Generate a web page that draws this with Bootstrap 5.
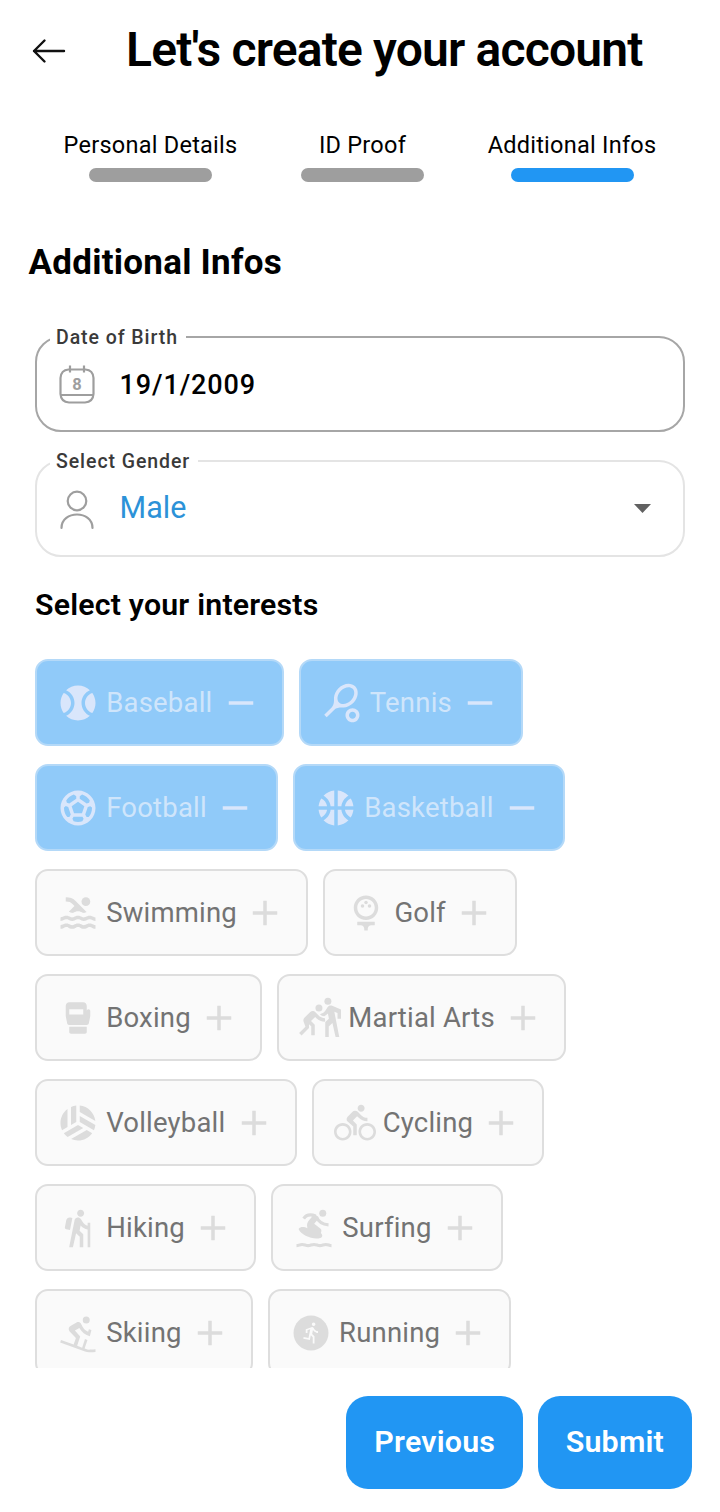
<!DOCTYPE html>
<html lang="en">
<head>
<meta charset="utf-8">
<meta name="viewport" content="width=device-width, initial-scale=1">
<title>Create account</title>
<link href="https://cdn.jsdelivr.net/npm/bootstrap@5.3.0/dist/css/bootstrap.min.css" rel="stylesheet">
<style>
body{font-family:Roboto,"Liberation Sans",sans-serif;color:#000;background:#fff;line-height:1}
.screen{height:1512px;overflow:hidden}
.topbar{height:102px;padding-left:27px}
.topbar h1{font-size:48px;font-weight:600;letter-spacing:-.82px;margin:0 0 0 57px;padding-bottom:2px;line-height:1;white-space:nowrap}
.steps{height:84px;padding-top:32px}
.step{font-size:23.5px;letter-spacing:.25px;white-space:nowrap}
.step-personal{width:240px}
.step-proof{width:184px}
.step-infos{width:235px}
.step-line{width:123px;height:14px;border-radius:7px;background:#9e9e9e;margin-top:10px}
.step-line.active{background:#2196f3}
.section-title{font-size:35px;font-weight:700;letter-spacing:.25px;margin:0;line-height:42px;padding:56px 0 0 28.5px}
.field{height:96px;border:2px solid #a6a6a6;border-radius:26px;margin:52px 35px 0;padding:0 32px 0 20px}
.field.soft{height:97px;border-color:#e4e4e4;margin-top:28px}
.field label{left:13px;top:-10px;background:#fff;padding:0 8px 0 6px;font-size:19.5px;line-height:20px;font-weight:500;letter-spacing:.93px;color:#3a3a3a}
.value{margin-left:22.5px}
.date{font-size:27px;letter-spacing:.9px;font-weight:500;margin-top:2px}
.male{font-size:30.5px;color:#2c92d8;margin-top:-1px}
.interests-title{font-size:30.3px;font-weight:600;letter-spacing:.2px;margin:0;line-height:36px;padding:30px 0 0 35px}
.chips{height:709px;margin-top:36px;overflow:hidden;gap:18px 15px;padding:0 35px}
.chip{height:87px;border:2px solid #dedede;border-radius:13px;background:#fafafa;color:#737373;font-size:27.5px;letter-spacing:.2px;padding:0 20px;gap:7.2px}
.chip span{padding-top:1px}
.chip svg{width:42px;height:42px;fill:#dcdcdc;flex:none}
.chip.picked{background:#90caf9;border-color:#b4d9f8;color:#cfe5fb}
.chip.picked svg{fill:#d9e6fb}
.actions{padding:28px 28px 0 0;gap:14.5px}
.btn-main{height:93px;border-radius:22px;background:#2196f3;color:#fff;font-size:30.4px;font-weight:600;letter-spacing:.2px;padding:0 28px 2px;border:0}
</style>
</head>
<body>
<main class="screen d-flex flex-column">
<header class="topbar d-flex align-items-center">
<svg width="42" height="42" viewBox="0 0 42 42" fill="none" stroke="#111" stroke-width="2.4" stroke-linecap="round" stroke-linejoin="round"><path d="M37 21H7M17.5 10.5L7 21l10.5 10.5"/></svg>
<h1>Let's create your account</h1>
</header>
<nav class="steps d-flex justify-content-center">
<div class="step step-personal d-flex flex-column align-items-center">Personal Details<div class="step-line"></div></div>
<div class="step step-proof d-flex flex-column align-items-center">ID Proof<div class="step-line"></div></div>
<div class="step step-infos d-flex flex-column align-items-center">Additional Infos<div class="step-line active"></div></div>
</nav>
<h2 class="section-title">Additional Infos</h2>
<div class="field position-relative d-flex align-items-center">
<label class="position-absolute">Date of Birth</label>
<svg width="40" height="44" viewBox="0 0 40 44" fill="none" stroke="#9e9e9e" stroke-width="2.2"><path d="M11.5 7.500H28.500Q36 8 36.500 16V32Q36 40 28 40.500H12Q4 40 3.500 32V16Q4 8 11.500 7.500zM4 33H36M13 3.500V10.500M27 3.500V10.500"/><text x="20" y="28" text-anchor="middle" font-family="Roboto" font-weight="700" font-size="16.5" fill="#9e9e9e" stroke="none">8</text></svg>
<span class="value date">19/1/2009</span>
</div>
<div class="field soft position-relative d-flex align-items-center">
<label class="position-absolute">Select Gender</label>
<svg width="40" height="44" viewBox="0 0 40 44" fill="none" stroke="#9e9e9e" stroke-width="2.2" stroke-linecap="round"><circle cx="20" cy="14" r="9.3"/><path d="M4.500 41C4.500 23 35.500 23 35.500 41"/></svg>
<span class="value male">Male</span>
<svg class="ms-auto" width="17" height="9" viewBox="0 0 17 9"><path d="M0 0H17L8.500 9z" fill="#616161"/></svg>
</div>
<h3 class="interests-title">Select your interests</h3>
<section class="chips d-flex flex-wrap align-content-start">
<div class="chip picked d-flex align-items-center"><svg viewBox="0 0 24 24"><path d="M3.810 6.280C2.670 7.900 2 9.870 2 12s.67 4.100 1.810 5.720C6.230 16.950 8 14.680 8 12S6.230 7.050 3.810 6.280zM20.190 6.280C17.770 7.050 16 9.320 16 12s1.770 4.950 4.190 5.720C21.330 16.100 22 14.130 22 12s-.67-4.100-1.810-5.720zM14 12c0-3.280 1.970-6.090 4.790-7.330C17.010 3.020 14.630 2 12 2S6.990 3.020 5.210 4.670C8.030 5.910 10 8.720 10 12s-1.970 6.090-4.790 7.330C6.990 20.980 9.370 22 12 22s5.010-1.020 6.790-2.670C15.970 18.090 14 15.280 14 12z"/></svg><span>Baseball</span><svg viewBox="0 0 24 24"><path d="M19 13H5v-2h14z"/></svg></div>
<div class="chip picked d-flex align-items-center"><svg viewBox="0 0 24 24"><path d="M19.520 2.490c-2.340-2.340-6.620-1.870-9.550 1.060-1.600 1.600-2.520 3.870-2.540 5.460-.02 1.580.26 3.890-1.350 5.500l-4.240 4.240 1.420 1.420 4.240-4.240c1.610-1.610 3.920-1.330 5.500-1.350s3.860-.94 5.460-2.540c2.920-2.930 3.400-7.210 1.060-9.550zm-9.200 9.190c-1.530-1.530-1.050-4.610 1.060-6.720s5.180-2.590 6.720-1.060c1.530 1.530 1.050 4.610-1.060 6.720s-5.180 2.590-6.720 1.060zM18 17c.53 0 1.040.21 1.410.59.78.78.78 2.050 0 2.830-.37.37-.88.58-1.410.58s-1.040-.21-1.410-.59c-.78-.78-.78-2.050 0-2.830.37-.37.88-.58 1.410-.58m0-2c-1.020 0-2.050.39-2.830 1.170-1.560 1.560-1.560 4.090 0 5.660.78.78 1.810 1.170 2.830 1.170s2.050-.39 2.830-1.170c1.560-1.560 1.560-4.090 0-5.660C20.050 15.390 19.020 15 18 15z"/></svg><span>Tennis</span><svg viewBox="0 0 24 24"><path d="M19 13H5v-2h14z"/></svg></div>
<div class="chip picked d-flex align-items-center"><svg viewBox="0 0 24 24"><path d="M12 2C6.480 2 2 6.480 2 12s4.480 10 10 10 10-4.480 10-10S17.520 2 12 2zm1 3.300l1.350-.95c1.820.56 3.370 1.760 4.380 3.340l-.39 1.340-1.350.46L13 6.700V5.300zm-3.350-.95L11 5.300v1.400L7.010 9.490l-1.350-.46-.39-1.340c1.010-1.570 2.560-2.770 4.380-3.340zM7.080 17.110l-1.140.1C4.730 15.810 4 13.990 4 12c0-.12.01-.23.02-.35l1-.73 1.380.48 1.460 4.340-.78 1.370zm7.420 2.480c-.79.26-1.630.41-2.500.41s-1.710-.15-2.500-.41l-.69-1.490.64-1.100h5.110l.64 1.110-.7 1.480zM14.270 15H9.730l-1.350-4.020L12 8.440l3.630 2.540L14.270 15zm3.790 2.210l-1.140-.1-.79-1.370 1.460-4.340 1.390-.47 1 .73c.01.11.02.22.02.34 0 1.990-.73 3.810-1.940 5.210z"/></svg><span>Football</span><svg viewBox="0 0 24 24"><path d="M19 13H5v-2h14z"/></svg></div>
<div class="chip picked d-flex align-items-center"><svg viewBox="0 0 24 24"><path d="M17.090 11h4.860c-.16-1.610-.71-3.110-1.540-4.400-1.730.83-2.990 2.450-3.320 4.400zM6.910 11C6.580 9.050 5.320 7.430 3.590 6.600 2.760 7.890 2.210 9.390 2.050 11h4.860zM15.070 11c.32-2.590 1.880-4.790 4.060-6-1.600-1.630-3.740-2.710-6.130-2.950V11h2.070zM8.930 11H11V2.050C8.610 2.290 6.460 3.370 4.870 5c2.180 1.210 3.740 3.410 4.060 6zM15.070 13H13v8.950c2.390-.24 4.540-1.320 6.130-2.950-2.180-1.210-3.740-3.410-4.060-6zM3.590 17.400c1.730-.83 2.990-2.450 3.320-4.400H2.050c.16 1.610.71 3.110 1.540 4.400zM17.090 13c.33 1.950 1.590 3.570 3.320 4.400.83-1.290 1.380-2.790 1.540-4.400h-4.860zM8.930 13c-.32 2.590-1.880 4.790-4.060 6 1.600 1.630 3.740 2.710 6.130 2.950V13H8.930z"/></svg><span>Basketball</span><svg viewBox="0 0 24 24"><path d="M19 13H5v-2h14z"/></svg></div>
<div class="chip d-flex align-items-center"><svg viewBox="0 0 24 24"><path d="M22 21c-1.110 0-1.730-.37-2.180-.64-.37-.22-.6-.36-1.150-.36-.56 0-.78.13-1.150.36-.46.27-1.070.64-2.180.64s-1.730-.37-2.180-.64c-.37-.22-.6-.36-1.150-.36-.56 0-.78.13-1.150.36-.46.27-1.080.64-2.190.64-1.110 0-1.730-.37-2.180-.64-.37-.23-.6-.36-1.150-.36s-.78.13-1.150.36c-.46.27-1.080.64-2.190.64v-2c.56 0 .78-.13 1.150-.36.46-.27 1.080-.64 2.190-.64s1.730.37 2.180.64c.37.23.59.36 1.150.36.56 0 .78-.13 1.150-.36.46-.27 1.080-.64 2.190-.64 1.110 0 1.730.37 2.180.64.37.22.6.36 1.150.36s.78-.13 1.150-.36c.45-.27 1.070-.64 2.180-.64s1.730.37 2.180.64c.37.23.59.36 1.150.36v2zm0-4.500c-1.110 0-1.730-.37-2.180-.64-.37-.22-.6-.36-1.150-.36-.56 0-.78.13-1.150.36-.45.27-1.070.64-2.180.64s-1.730-.37-2.180-.64c-.37-.22-.6-.36-1.150-.36-.56 0-.78.13-1.150.36-.45.27-1.070.64-2.180.64s-1.730-.37-2.180-.64c-.37-.22-.6-.36-1.150-.36s-.78.13-1.150.36c-.47.27-1.090.64-2.200.64v-2c.56 0 .78-.13 1.150-.36.45-.27 1.070-.64 2.180-.64s1.730.37 2.180.64c.37.22.6.36 1.150.36.56 0 .78-.13 1.150-.36.45-.27 1.070-.64 2.180-.64s1.730.37 2.180.64c.37.22.6.36 1.150.36s.78-.13 1.150-.36c.45-.27 1.070-.64 2.180-.64s1.730.37 2.180.64c.37.22.6.36 1.150.36v2zM8.670 12c.56 0 .78-.13 1.150-.36.46-.27 1.080-.64 2.190-.64 1.110 0 1.730.37 2.180.64.37.22.6.36 1.150.36s.78-.13 1.150-.36c.12-.07.26-.15.41-.23L10.480 5C8.930 3.450 7.500 2.990 5 3v2.500c1.820-.01 2.890.39 4 1.500l1 1-3.250 3.250c.31.12.56.27.77.39.37.23.59.36 1.150.36z"/><circle cx="16.500" cy="5.500" r="2.500"/></svg><span>Swimming</span><svg viewBox="0 0 24 24"><path d="M19 13h-6v6h-2v-6H5v-2h6V5h2v6h6z"/></svg></div>
<div class="chip d-flex align-items-center"><svg viewBox="0 0 24 24"><path d="M12 16c3.870 0 7-3.130 7-7s-3.130-7-7-7-7 3.130-7 7 3.130 7 7 7zm0-12c2.760 0 5 2.240 5 5s-2.240 5-5 5-5-2.240-5-5 2.240-5 5-5z"/><circle cx="10" cy="8" r="1"/><circle cx="14" cy="8" r="1"/><circle cx="12" cy="6" r="1"/><path d="M7 19h2c1.100 0 2 .9 2 2v1h2v-1c0-1.100.9-2 2-2h2v-2H7v2z"/></svg><span>Golf</span><svg viewBox="0 0 24 24"><path d="M19 13h-6v6h-2v-6H5v-2h6V5h2v6h6z"/></svg></div>
<div class="chip d-flex align-items-center"><svg viewBox="0 0 24 24"><path d="M7 20c0 .55.45 1 1 1h8c.55 0 1-.45 1-1v-3H7v3zM18 7c-.55 0-1 .45-1 1V5c0-1.100-.9-2-2-2H7c-1.100 0-2 .9-2 2v5.800c0 .13.01.26.04.39l.8 4c.09.47.5.8.98.8H17c.55 0 1.090-.44 1.200-.98l.77-3.830c.02-.12.03-.25.03-.38V8C19 7.450 18.550 7 18 7zM15 10H7V7h8V10z"/></svg><span>Boxing</span><svg viewBox="0 0 24 24"><path d="M19 13h-6v6h-2v-6H5v-2h6V5h2v6h6z"/></svg></div>
<div class="chip d-flex align-items-center"><svg viewBox="0 0 24 24"><circle cx="16.500" cy="2.380" r="2"/><path d="M24 11.880v-4.700l-5.050-2.140c-.97-.41-2.090-.06-2.650.84l-1 1.600c-.67 1.180-1.910 2.060-3.410 2.320l.06.06c.69.69 1.520 1.070 2.460 1.170.8-.42 1.520-.98 2.090-1.640l.6 3-1.160 1.100-.94.890v8.500h2v-6l2.100-2 1.800 8H23l-2.800-14.400 1.800.7v3.300h2z"/><circle cx="11.400" cy="6.300" r="2"/><path d="M11.240 10.560l-2-2c-.1-.1-.2-.18-.31-.26-.22-.14-.47-.24-.72-.28-.13-.03-.25-.04-.38-.04-.51 0-1.020.2-1.410.59l-3.340 3.340c-.41.41-.62.98-.58 1.540 0 .18.04.37.11.55l1.070 2.950-3.630 3.630L1.460 22l4.240-4.240v-2.220L7 16.750v5.130h2v-6l-2.120-2.120 2.360-2.360.71.71c1.290 1.260 2.970 2.040 5.030 2.040l-.14-2.070c-1.500-.02-2.700-.62-3.600-1.520z"/></svg><span>Martial Arts</span><svg viewBox="0 0 24 24"><path d="M19 13h-6v6h-2v-6H5v-2h6V5h2v6h6z"/></svg></div>
<div class="chip d-flex align-items-center"><svg viewBox="0 0 24 24"><path d="M6 4.010C3.580 5.840 2 8.730 2 12c0 1.460.32 2.850.89 4.110L6 14.310V4.010zM11 11.420V2.050C9.940 2.160 8.930 2.430 8 2.840v10.320L11 11.420zM12 13.150l-8.110 4.680c.61.84 1.340 1.590 2.180 2.200L15 14.890 12 13.150zM13 7.960v3.460l8.110 4.680c.42-.93.7-1.930.82-2.980L13 7.960zM8.070 21.200C9.280 21.710 10.600 22 12 22c3.340 0 6.290-1.650 8.110-4.160L17 16.040 8.070 21.200zM21.920 10.810c-.55-4.630-4.260-8.300-8.920-8.760v3.600L21.920 10.810z"/></svg><span>Volleyball</span><svg viewBox="0 0 24 24"><path d="M19 13h-6v6h-2v-6H5v-2h6V5h2v6h6z"/></svg></div>
<div class="chip d-flex align-items-center"><svg viewBox="0 0 24 24"><path d="M15.500 5.500c1.100 0 2-.9 2-2s-.9-2-2-2-2 .9-2 2 .9 2 2 2zM5 12c-2.800 0-5 2.200-5 5s2.200 5 5 5 5-2.200 5-5-2.200-5-5-5zm0 8.500c-1.900 0-3.500-1.600-3.500-3.500s1.600-3.500 3.500-3.500 3.500 1.600 3.500 3.500-1.600 3.500-3.500 3.500zm5.800-10l2.400-2.400.8.8c1.300 1.300 3 2.100 5.100 2.100V9c-1.500 0-2.700-.6-3.600-1.500l-1.900-1.900c-.5-.4-1-.6-1.600-.6s-1.100.2-1.400.6L7.800 8.400c-.4.4-.6.9-.6 1.400 0 .6.2 1.100.6 1.400L11 14v5h2v-6.200l-2.200-2.300zM19 12c-2.800 0-5 2.200-5 5s2.200 5 5 5 5-2.200 5-5-2.200-5-5-5zm0 8.500c-1.900 0-3.500-1.600-3.500-3.500s1.600-3.500 3.500-3.500 3.500 1.600 3.500 3.500-1.600 3.500-3.500 3.500z"/></svg><span>Cycling</span><svg viewBox="0 0 24 24"><path d="M19 13h-6v6h-2v-6H5v-2h6V5h2v6h6z"/></svg></div>
<div class="chip d-flex align-items-center"><svg viewBox="0 0 24 24"><path d="M13.500 5.500c1.100 0 2-.9 2-2s-.9-2-2-2-2 .9-2 2 .9 2 2 2zM17.500 10.780c-1.230-.37-2.220-1.170-2.800-2.180l-1-1.600c-.41-.65-1.110-1-1.840-1-.78 0-1.590.5-1.780 1.440S7 23 7 23h2.100l1.800-8 2.100 2v6h2v-7.500l-2.100-2 .6-3c1 1.150 2.410 2.010 4 2.340V23H19V9h-1.500v1.780zM7.430 13.130l-2.120-.41c-.54-.11-.9-.63-.79-1.170l.76-3.930c.21-1.080 1.260-1.790 2.340-1.580l1.160.23L7.430 13.130z"/></svg><span>Hiking</span><svg viewBox="0 0 24 24"><path d="M19 13h-6v6h-2v-6H5v-2h6V5h2v6h6z"/></svg></div>
<div class="chip d-flex align-items-center"><svg viewBox="0 0 24 24"><circle cx="17" cy="3.500" r="2"/><path d="M3.200 12.600C4.300 11 6.600 11.300 8.200 12.200L8 10.400C8 9 9 7.500 10.300 6.300L11.500 4.500C13 4 14 5 14.700 6.600L12.100 9.600 15.600 12.300C16.500 13 16.300 14 15.900 14.800 17.100 15.900 17 17.200 15.600 17.700 11.500 18.900 4.600 16.200 3.200 12.600z"/><path d="M6.100 6.600C7.600 4.200 10.500 4.200 13 5.100M13.400 5.600C14.600 8.800 16.900 10 20.300 10.200M2 22.100c1.300 0 1.700-.7 3.200-.7s2 .7 3.400.7 2-.7 3.400-.7 2 .7 3.400.7 2-.7 3.400-.7 1.800.7 3.200.7" fill="none" stroke="#dcdcdc" stroke-width="1.8"/></svg><span>Surfing</span><svg viewBox="0 0 24 24"><path d="M19 13h-6v6h-2v-6H5v-2h6V5h2v6h6z"/></svg></div>
<div class="chip d-flex align-items-center"><svg viewBox="0 0 24 24"><circle cx="16.700" cy="4.500" r="2"/><path d="M15.780 20.900l.76.280c.54.200 1.120.320 1.730.320.880 0 1.720-.1 3.730-.2v1.500c-1.300.2-2.400.3-3.720.2-.8 0-1.560-.14-2.260-.4L1.800 17.400 2.300 15.980l7.230 2.660 1.280-3.820L7.250 11.120c-.9-.94-.68-2.470.45-3.120l3.480-2.010c.9-.52 2.050-.19 2.550.72l.87 1.760c.67 1.290 1.800 2.300 3.180 2.820l.47-1.400 1.420.46-.89 3.450c-2.590-.69-4.760-2.420-6.020-4.710l-2.530 1.450 3.030 3.470-1.750 5.330 2.870 1.040 1.600-4.930c.45.240.93.440 1.420.6z"/></svg><span>Skiing</span><svg viewBox="0 0 24 24"><path d="M19 13h-6v6h-2v-6H5v-2h6V5h2v6h6z"/></svg></div>
<div class="chip d-flex align-items-center"><svg viewBox="0 0 24 24"><path d="M12 2C6.480 2 2 6.480 2 12s4.480 10 10 10 10-4.480 10-10S17.520 2 12 2z"/><path fill="#fafafa" d="M13.500 6c.55 0 1 .45 1 1s-.45 1-1 1-1-.45-1-1 .45-1 1-1zM16 12c-.7 0-2.010-.54-2.910-1.760l-.41 2.350 1.320 1.270V18h-1v-3.580l-1.110-1.070-.52 2.640-3.770-.77.2-.98 2.780.57.96-4.890-1.540.57V12H9v-2.110l3.280-1.210c.49-.18 1.030.06 1.260.53C14.370 10.900 15.590 11 16 11z"/></svg><span>Running</span><svg viewBox="0 0 24 24"><path d="M19 13h-6v6h-2v-6H5v-2h6V5h2v6h6z"/></svg></div>
</section>
<footer class="actions d-flex justify-content-end">
<button class="btn btn-main">Previous</button>
<button class="btn btn-main">Submit</button>
</footer>
</main>
<script src="https://cdn.jsdelivr.net/npm/bootstrap@5.3.0/dist/js/bootstrap.bundle.min.js"></script>
</body>
</html>
